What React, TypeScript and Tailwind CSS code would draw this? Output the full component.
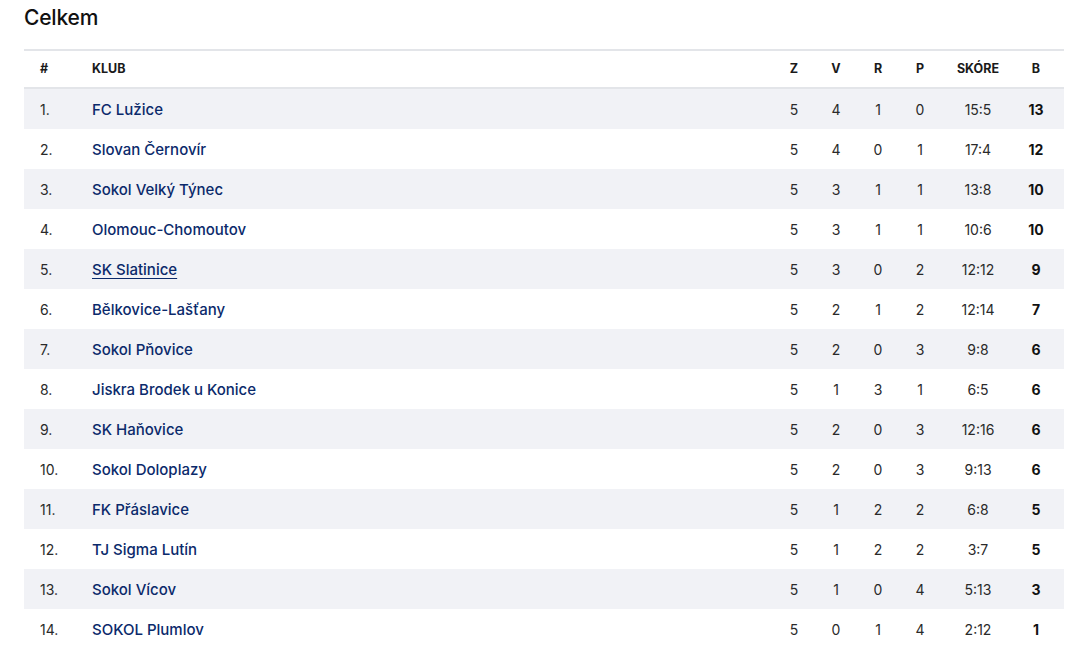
import React from "react";

const rows: [string, string, number, number, number, number, string, number][] = [
  ["1.", "FC Lužice", 5, 4, 1, 0, "15:5", 13],
  ["2.", "Slovan Černovír", 5, 4, 0, 1, "17:4", 12],
  ["3.", "Sokol Velký Týnec", 5, 3, 1, 1, "13:8", 10],
  ["4.", "Olomouc-Chomoutov", 5, 3, 1, 1, "10:6", 10],
  ["5.", "SK Slatinice", 5, 3, 0, 2, "12:12", 9],
  ["6.", "Bělkovice-Lašťany", 5, 2, 1, 2, "12:14", 7],
  ["7.", "Sokol Pňovice", 5, 2, 0, 3, "9:8", 6],
  ["8.", "Jiskra Brodek u Konice", 5, 1, 3, 1, "6:5", 6],
  ["9.", "SK Haňovice", 5, 2, 0, 3, "12:16", 6],
  ["10.", "Sokol Doloplazy", 5, 2, 0, 3, "9:13", 6],
  ["11.", "FK Přáslavice", 5, 1, 2, 2, "6:8", 5],
  ["12.", "TJ Sigma Lutín", 5, 1, 2, 2, "3:7", 5],
  ["13.", "Sokol Vícov", 5, 1, 0, 4, "5:13", 3],
  ["14.", "SOKOL Plumlov", 5, 0, 1, 4, "2:12", 1],
];

const grid = "grid grid-cols-[68px_1fr_42px_42px_42px_42px_74px_42px] pr-[7px] items-center";

export default function App() {
  return (
    <div className="bg-white min-h-[671px] w-[1083px] px-[24px] pt-[4px]" style={{ fontFamily: "Inter, 'Noto Sans', sans-serif" }}>
      <h2 className="text-[21px] font-medium text-[#111] leading-[28px] tracking-[-0.2px]">Celkem</h2>
      <div className="w-[1040px] mt-[17px] border-t-2 border-[#e3e5e9]">
        <div className={`${grid} h-[38px] text-[12.5px] font-bold text-[#1a1a1a] uppercase border-b-2 border-[#e3e5e9]`}>
          <div className="pl-[16px]">#</div>
          <div>Klub</div>
          <div className="text-center">Z</div>
          <div className="text-center">V</div>
          <div className="text-center">R</div>
          <div className="text-center">P</div>
          <div className="text-center">Skóre</div>
          <div className="text-center">B</div>
        </div>
        {rows.map((r, i) => (
          <div
            key={i}
            className={`${grid} h-[40px] text-[14px] text-[#2a2a2a] ${i % 2 === 0 ? "bg-[#f1f2f6]" : "bg-white"}`}
          >
            <div className="pl-[16px]">{r[0]}</div>
            <div className={`pt-[2px] text-[15px] font-medium text-[#0b2a6b] ${r[1] === "SK Slatinice" ? "underline underline-offset-[3px]" : ""}`}>{r[1]}</div>
            <div className="text-center">{r[2]}</div>
            <div className="text-center">{r[3]}</div>
            <div className="text-center">{r[4]}</div>
            <div className="text-center">{r[5]}</div>
            <div className="text-center">{r[6]}</div>
            <div className="text-center font-bold text-[#111]">{r[7]}</div>
          </div>
        ))}
      </div>
    </div>
  );
}
